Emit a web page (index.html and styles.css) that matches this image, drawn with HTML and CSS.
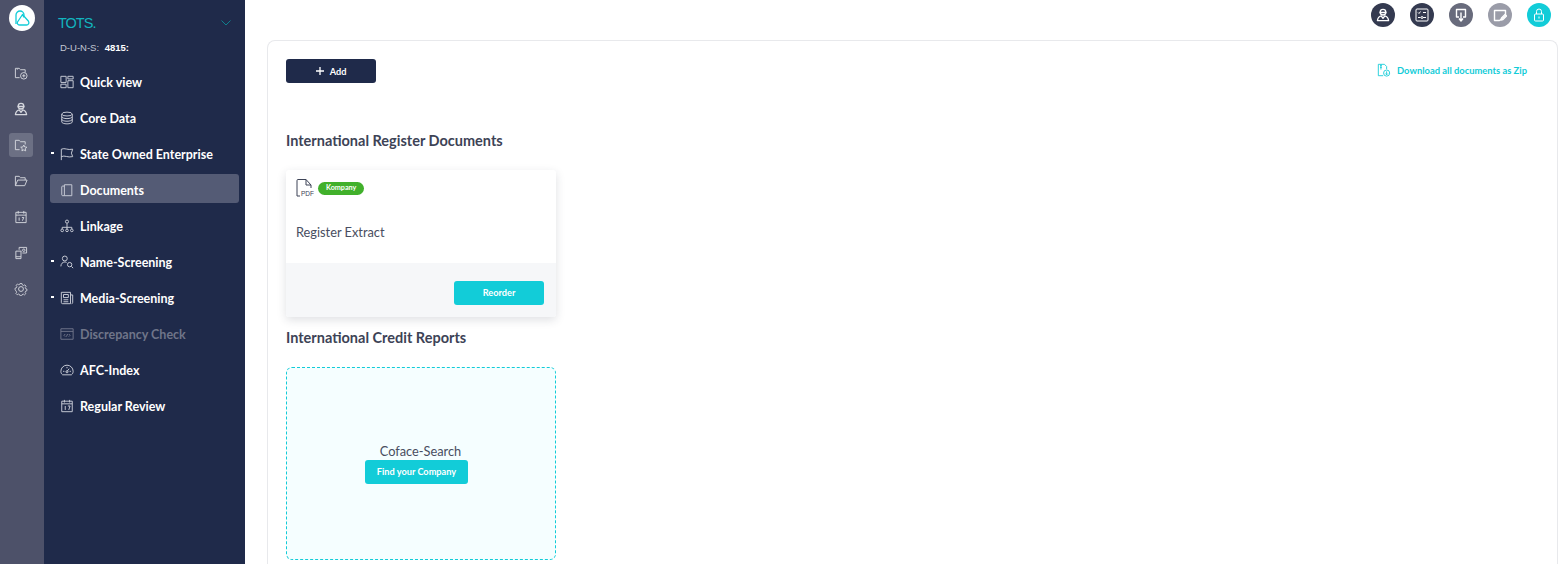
FILE: index.html
```html
<!doctype html>
<html lang="en">
  <head>
    <meta charset="UTF-8" />
    <title>Documents</title>
    <link rel="stylesheet" href="styles.css">
  </head>
  <body>
    <aside class="rail">
      <div class="logo">
        <svg width="16" height="16" viewBox="0 0 16 16" fill="none" stroke="#12ccd8" stroke-width="1.300" stroke-linejoin="round">
          <path d="M2 14V5a4 4 0 0 1 8 0c0 1-.3 1.600-1 2.300" />
          <path d="M6 15h6.500c2 0 3-2 2-3.800L8.500 4.500 3.500 12c-.8 1.500.5 3 2.500 3z" />
        </svg>
      </div>
      <nav class="rail-nav">
        <a class="rail-item">
          <svg width="14" height="14" viewBox="0 0 15 15" class="ico"><path d="M6 12.500H1.500v-10h4l1.500 1.500h5v3" /><path d="M3.500 4v-1" /><circle cx="10.500" cy="10.500" r="3.500" /><path d="M10.500 8.800v3.400M8.800 10.500h3.400" /></svg>
        </a>
        <a class="rail-item">
          <svg width="14" height="14" viewBox="0 0 15 15" class="ico ico-bold"><circle cx="7.500" cy="4.500" r="3" /><path d="M3.800 4.800h7.400M1.500 13.500c.5-3 2-4.500 4-5l2 2.500 2-2.500c2 .5 3.500 2 4 5z" /></svg>
        </a>
        <a class="rail-item active">
          <svg width="14" height="14" viewBox="0 0 15 15" class="ico"><path d="M6 12.500H1.500v-10h4l1.500 1.500h5v3" /><path d="M10.500 7.500l1 2.100 2.300.3-1.700 1.600.4 2.300-2-1.100-2 1.100.4-2.300-1.700-1.600 2.300-.3z" /></svg>
        </a>
        <a class="rail-item">
          <svg width="14" height="14" viewBox="0 0 15 15" class="ico"><path d="M1.500 12.500v-10h4l1.500 1.500h5v2.500" /><path d="M1.500 12.500l2.500-6h10l-2.500 6z" /></svg>
        </a>
        <a class="rail-item">
          <svg width="14" height="14" viewBox="0 0 15 15" class="ico"><rect x="2" y="2.500" width="11" height="11" /><path d="M2 5.500h11M4.500 1v3M10.500 1v3M5.500 8v3.500M8.500 8h2l-1.500 3.500" /></svg>
        </a>
        <a class="rail-item">
          <svg width="14" height="14" viewBox="0 0 15 15" class="ico"><path d="M8 5.500H2v8h5.500v-8" /><path d="M2 11.500h5.500" /><path d="M5.500 4V1.500h8v6H9" /><circle cx="10.500" cy="4.500" r="1.300" /></svg>
        </a>
        <a class="rail-item">
          <svg width="14" height="14" viewBox="0 0 15 15" class="ico"><circle cx="7.500" cy="7.500" r="2.600" /><path d="M6.300 1h2.400l.4 1.700 1.500.7 1.500-.9 1.500 1.700-1 1.400.5 1.600 1.400.3v2.200l-1.500.4-.6 1.500.9 1.400-1.600 1.500-1.400-.9-1.600.6-.4 1.300H6.300l-.4-1.400-1.500-.6-1.400.9-1.600-1.600.9-1.400-.6-1.500L.5 8.600V6.400l1.500-.3.600-1.600-.9-1.400 1.600-1.600 1.400.9 1.500-.6z" transform="translate(.75 .75) scale(.9)" /></svg>
        </a>
      </nav>
    </aside>

    <aside class="side">
      <div class="company">
        <span class="company-name">TOTS.</span>
        <svg width="10" height="6" viewBox="0 0 10 6" fill="none" stroke="#0e7f8c" stroke-width="1"><path d="M.5.500 5 5 9.500.500" /></svg>
      </div>
      <div class="duns"><span>D-U-N-S:</span> <b>4815:</b></div>
      <nav class="menu">
        <a class="menu-item">
          <svg width="14" height="14" viewBox="0 0 16 16" class="ico"><rect x="1" y="1.500" width="6" height="7" /><rect x="9" y="1.500" width="6" height="3" /><rect x="1" y="10.500" width="6" height="4" /><rect x="9" y="6.500" width="6" height="8" /></svg>
          Quick view
        </a>
        <a class="menu-item">
          <svg width="14" height="14" viewBox="0 0 16 16" class="ico"><ellipse cx="8" cy="3.500" rx="6" ry="2.200" /><path d="M2 3.500v9c0 1.200 2.700 2.200 6 2.200s6-1 6-2.200v-9M2 6.500c0 1.200 2.700 2.200 6 2.200s6-1 6-2.200M2 9.500c0 1.200 2.700 2.200 6 2.200s6-1 6-2.200" /></svg>
          Core Data
        </a>
        <a class="menu-item dotted">
          <svg width="14" height="14" viewBox="0 0 16 16" class="ico"><path d="M1.500 15V2.500c4-2 7 1.500 13 0l-1.500 4.500 1.500 4c-6 1.500-9-2-13 0" /></svg>
          State Owned Enterprise
        </a>
        <a class="menu-item active">
          <svg width="14" height="14" viewBox="0 0 16 16" class="ico"><path d="M5 2h8.500v12.500H5z" /><path d="M5 3.500H3c-.8 0-1 .5-1 1v9c0 .6.400 1 1 1h2" /></svg>
          Documents
        </a>
        <a class="menu-item">
          <svg width="14" height="14" viewBox="0 0 16 16" class="ico"><circle cx="8" cy="3" r="1.800" /><circle cx="2.500" cy="13" r="1.500" /><circle cx="8" cy="13" r="1.500" /><circle cx="13.500" cy="13" r="1.500" /><path d="M8 5v6.500M2.500 11.500V9.500h11v2" /></svg>
          Linkage
        </a>
        <a class="menu-item dotted">
          <svg width="14" height="14" viewBox="0 0 16 16" class="ico"><circle cx="5.500" cy="4" r="2.800" /><path d="M1 13c0-3 2-5 4.500-5 1 0 1.500.2 2 .5" /><circle cx="11" cy="11" r="2.500" /><path d="M13 13l2 2" /></svg>
          Name-Screening
        </a>
        <a class="menu-item dotted">
          <svg width="14" height="14" viewBox="0 0 16 16" class="ico"><path d="M1.500 1.500h10.500v13H3c-1 0-1.500-.5-1.500-1.500z" /><path d="M12 4.500h2.500V13c0 1-.5 1.500-1.200 1.500" /><rect x="4" y="4" width="5.500" height="3.500" /><path d="M4 10h5.500M4 12.300h5.500" /></svg>
          Media-Screening
        </a>
        <a class="menu-item disabled">
          <svg width="14" height="14" viewBox="0 0 16 16" class="ico"><rect x="1" y="2" width="14" height="12" /><path d="M1 5h14M6 8l-1.500 1.500L6 11M10 8l1.500 1.500L10 11M8.700 8l-1.400 3" /></svg>
          Discrepancy Check
        </a>
        <a class="menu-item">
          <svg width="14" height="14" viewBox="0 0 16 16" class="ico"><path d="M3 13.500h10c1.500-1 2-2.500 2-4a7 7 0 0 0-14 0c0 1.500.5 3 2 4z" /><path d="M8 9.500l2.500-3M3.500 9.500h1.500M11 9.500h1.500M8 4.500V6" /><circle cx="8" cy="10" r="1.200" /></svg>
          AFC-Index
        </a>
        <a class="menu-item">
          <svg width="14" height="14" viewBox="0 0 16 16" class="ico"><rect x="2" y="2.500" width="12" height="12" /><path d="M2 5.500h12M5 1v3M11 1v3M6 8v4.500M9 8h2.500l-1.500 4.500" /></svg>
          Regular Review
        </a>
      </nav>
    </aside>

    <div class="page">
      <header class="topbar">
        <span class="round dark">
          <svg width="14" height="14" viewBox="0 0 15 15" class="ico ico-bold"><circle cx="7.500" cy="4.500" r="3" /><path d="M3.800 4.800h7.400M1.500 13.500c.5-3 2-4.500 4-5l2 2.500 2-2.500c2 .5 3.500 2 4 5z" /></svg>
        </span>
        <span class="round dark">
          <svg width="14" height="14" viewBox="0 0 14 14" class="ico"><rect x="1" y="1" width="12" height="12" rx="1" /><path d="M3 4.500l1 1 1.500-2M8 4.500h3M3 9.500h2.500M8 9.500h3" /><circle cx="7" cy="9.500" r="1" /></svg>
        </span>
        <span class="round gray">
          <svg width="14" height="14" viewBox="0 0 14 14" class="ico ico-bold"><path d="M5 9H2.500V1.500h9V9H9" /><path d="M7 4.500v8M5 10.500l2 2.500 2-2.500" /></svg>
        </span>
        <span class="round light">
          <svg width="14" height="14" viewBox="0 0 14 14" class="ico ico-bold"><path d="M6.500 12.500H1.500v-10h11v5.500z" /><path d="M8 12l.5-2 3.500-3.500 1.500 1.500L10 11.500z" /></svg>
        </span>
        <span class="round cyan">
          <svg width="14" height="14" viewBox="0 0 14 14" class="ico"><rect x="2.500" y="6" width="9" height="7" rx="1" /><path d="M4.500 6V3.500a2.500 2.500 0 0 1 5 0V6M7 8.500v2" /></svg>
        </span>
      </header>

      <main class="panel">
        <div class="panel-top">
          <button class="btn btn-dark">
            <svg width="8" height="8" viewBox="0 0 8 8" fill="none" stroke="#fff" stroke-width="1.300"><path d="M4 0v8M0 4h8" /></svg>
            Add
          </button>
          <a class="zip">
            <svg width="14" height="14" viewBox="0 0 16 16" fill="none" stroke="#12ccd8" stroke-width="1"><path d="M7 14.500H1.500v-13h7l2.500 2.500v3" /><path d="M4.500 1.500v6M3.500 3h2M3.500 5h2" /><circle cx="11" cy="11.500" r="3.500" /><path d="M11 9.500v4M9.500 12l1.500 1.500 1.500-1.500" /></svg>
            Download all documents as Zip
          </a>
        </div>

        <h2 class="section-title first">International Register Documents</h2>
        <article class="doc-card">
          <div class="doc-body">
            <div class="doc-head">
              <svg class="pdf-icon" width="18" height="18" viewBox="0 0 18 18" fill="none" stroke="#3d4356" stroke-width="1"><path d="M1 17V1.500c0-.5.200-1 1-1h8l5 5.500v3" /><path d="M10 .500V6h5M1 17h3" /><text x="5" y="16.500" textLength="13" lengthAdjust="spacingAndGlyphs" class="pdf-text">PDF</text></svg>
              <span class="badge">Kompany</span>
            </div>
            <p class="doc-name">Register Extract</p>
          </div>
          <div class="doc-foot">
            <button class="btn btn-cyan">Reorder</button>
          </div>
        </article>

        <h2 class="section-title">International Credit Reports</h2>
        <div class="search-card">
          <span class="search-label">Coface-Search</span>
          <button class="btn btn-cyan btn-find">Find your Company</button>
        </div>
      </main>
    </div>
  </body>
</html>
```

FILE: styles.css
```css
* {
  box-sizing: border-box;
}

html,
body {
  height: 564px;
  overflow: hidden;
}

body {
  margin: 0;
  display: flex;
  font-family: 'Lato', 'Noto Sans', sans-serif;
  color: #3d4356;
  background: white;
}

.ico {
  fill: none;
  stroke: currentColor;
  stroke-width: 1;
  stroke-linejoin: round;
  flex: none;
}

.ico-bold {
  stroke-width: 1.400;
}

.rail {
  width: 44px;
  flex: none;
  background: #4d5169;
  display: flex;
  flex-direction: column;
  align-items: center;
  padding-top: 5px;
}

.logo {
  width: 26px;
  height: 26px;
  background: white;
  border-radius: 50%;
  display: flex;
  align-items: center;
  justify-content: center;
}

.rail-nav {
  margin: 30px 2px 0 0;
  display: flex;
  flex-direction: column;
  gap: 12px;
}

.rail-item {
  width: 24px;
  height: 24px;
  border-radius: 3px;
  color: #d5d7de;
  display: flex;
  align-items: center;
  justify-content: center;
}

.rail-item.active {
  background: #6c7084;
}

.side {
  width: 201px;
  flex: none;
  background: #1f2a4a;
  padding: 0 6px;
}

.company {
  height: 42px;
  padding: 4px 8px 0 8px;
  display: flex;
  align-items: center;
  justify-content: space-between;
}

.company-name {
  color: #12b5bf;
  font-family: 'Liberation Sans', sans-serif;
  font-size: 14.500px;
  letter-spacing: -1px;
}

.duns {
  height: 11px;
  padding-left: 10px;
  font-family: 'Liberation Sans', sans-serif;
  font-size: 9.500px;
  line-height: 11px;
  color: #c3c7d2;
}

.duns b {
  color: white;
  margin-left: 3px;
}

.menu {
  margin-top: 13px;
  display: flex;
  flex-direction: column;
  gap: 7px;
}

.menu-item {
  position: relative;
  height: 29px;
  padding: 3px 0 0 10px;
  border-radius: 3px;
  display: flex;
  align-items: center;
  gap: 6px;
  color: white;
  font-size: 12.500px;
  font-weight: 700;
  white-space: nowrap;
}

.menu-item .ico {
  color: #c9ccd6;
  stroke-width: 1.100;
}

.menu-item.active {
  background: #545b75;
}

.menu-item.disabled {
  color: #6f7589;
}

.menu-item.disabled .ico {
  color: #6f7589;
}

.menu-item.dotted::before {
  content: '';
  position: absolute;
  left: 1px;
  top: 14px;
  width: 3px;
  height: 2px;
  background: white;
}

.page {
  flex: 1;
  min-width: 0;
  height: 564px;
  padding: 0 5px 0 22px;
  display: flex;
  flex-direction: column;
}

.topbar {
  height: 40px;
  flex: none;
  padding: 3px 7px 0 0;
  display: flex;
  justify-content: flex-end;
  align-items: flex-start;
  gap: 15px;
}

.round {
  width: 24px;
  height: 24px;
  border-radius: 50%;
  color: white;
  display: flex;
  align-items: center;
  justify-content: center;
}

.round.dark {
  background: #343a50;
}

.round.gray {
  background: #686b7c;
}

.round.light {
  background: #9a9ca8;
}

.round.cyan {
  background: #12ccd8;
}

.panel {
  flex: 1;
  min-height: 0;
  border: 1px solid #e8e9ec;
  border-bottom: 0;
  border-radius: 8px 8px 0 0;
  padding: 18px 18px 0;
}

.panel-top {
  display: flex;
  justify-content: space-between;
  align-items: flex-start;
}

.btn {
  height: 24px;
  border: 0;
  border-radius: 3px;
  color: white;
  font-family: inherit;
  font-size: 9.200px;
  font-weight: 700;
  display: flex;
  align-items: center;
  justify-content: center;
  gap: 6px;
}

.btn-dark {
  width: 90px;
  background: #1f2a4a;
}

.btn-cyan {
  background: #12ccd8;
  padding-bottom: 2px;
}

.zip {
  margin: 4px 12px 0 0;
  display: flex;
  align-items: center;
  gap: 6px;
  color: #12ccd8;
  font-size: 9.400px;
  font-weight: 700;
}

.section-title {
  margin: 0 0 20px;
  height: 18px;
  font-size: 14.500px;
  line-height: 18px;
  font-weight: 700;
}

.section-title.first {
  margin-top: 49px;
}

.doc-card {
  width: 270px;
  height: 147px;
  margin-bottom: 12px;
  border-radius: 3px;
  overflow: hidden;
  box-shadow: 0 3px 10px rgba(40, 45, 70, 0.15);
  display: flex;
  flex-direction: column;
}

.doc-body {
  flex: 1;
  padding: 9px 10px 0;
}

.doc-head {
  display: flex;
  align-items: flex-start;
  gap: 4px;
}

.pdf-icon {
  overflow: visible;
}

.pdf-text {
  font-family: 'Liberation Sans', sans-serif;
  font-size: 7.500px;
  fill: #3d4356;
  stroke: none;
}

.badge {
  margin-top: 3px;
  height: 13px;
  padding: 0 8px;
  background: #41b02b;
  color: white;
  border-radius: 7px;
  font-size: 7.200px;
  font-weight: 700;
  line-height: 12px;
}

.doc-name {
  margin: 27px 0 0;
  font-size: 12.800px;
  line-height: 16px;
  color: #484d60;
}

.doc-foot {
  height: 54px;
  flex: none;
  background: #f6f7f9;
  padding: 18px 12px 0;
  display: flex;
  justify-content: flex-end;
  align-items: flex-start;
}

.doc-foot .btn {
  width: 90px;
}

.search-card {
  width: 270px;
  height: 193px;
  border: 1px dashed #12ccd8;
  border-radius: 6px;
  background: #f5feff;
  display: flex;
  flex-direction: column;
  align-items: center;
  justify-content: center;
}

.search-label {
  font-size: 12.800px;
  line-height: 15px;
  margin: 0 0 1px -1px;
  color: #484d60;
}

.btn-find {
  width: 103px;
  margin-right: 9px;
}
```
